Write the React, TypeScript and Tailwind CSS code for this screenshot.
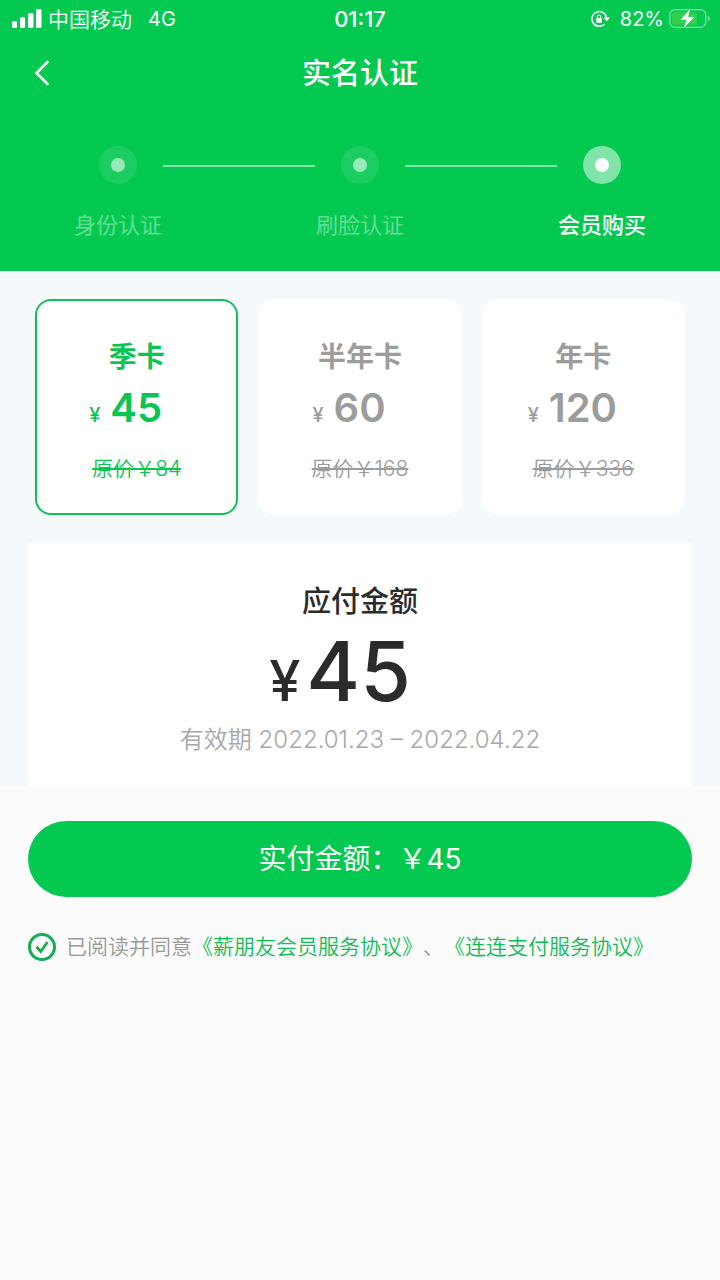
import React, { useState } from 'react';

interface Plan {
  id: string;
  name: string;
  price: number;
  original: number;
  period: string;
}

const steps = ['身份认证', '刷脸认证', '会员购买'];

const plans: Plan[] = [
  { id: 'quarter', name: '季卡', price: 45, original: 84, period: '2022.01.23 – 2022.04.22' },
  { id: 'half', name: '半年卡', price: 60, original: 168, period: '2022.01.23 – 2022.07.22' },
  { id: 'year', name: '年卡', price: 120, original: 336, period: '2022.01.23 – 2023.01.22' },
];

function StatusBar() {
  return (
    <div className="grid h-[38px] grid-cols-[1fr_auto_1fr] items-center px-[10px] text-[20px] leading-none">
      <div className="flex items-center">
        <svg className="mr-[6px] h-5 w-[32px]" viewBox="-2 0 32 20" fill="currentColor">
          <rect x="0" y="12" width="5" height="7" rx="1.6" />
          <rect x="8" y="8" width="5" height="11" rx="1.6" />
          <rect x="16" y="4" width="5.5" height="15" rx="1.6" />
          <rect x="24" y="0" width="5.5" height="19" rx="1.6" />
        </svg>
        <span className="mr-4 text-[21px] font-[350]">中国移动</span>
        <span className="font-normal">4G</span>
      </div>
      <span className="text-[22px] font-medium">01:17</span>
      <div className="flex items-center justify-end">
        {/* Rotation lock */}
        <svg className="mr-[10px] h-5 w-5" viewBox="0 0 20 20" fill="none">
          <path d="M14.4 15.2A7.4 7.4 0 1 1 16.6 9" stroke="currentColor" strokeWidth="1.6" />
          <path d="M13.6 8.6h6.2l-3.1 4z" fill="currentColor" />
          <rect x="6.2" y="9" width="5.6" height="5" rx="0.8" fill="currentColor" />
          <path d="M7.4 9.5V7.6a1.6 1.6 0 0 1 3.2 0v1.9" stroke="currentColor" strokeWidth="1.1" />
        </svg>
        <span className="mr-1 font-normal">82%</span>
        {/* Charging battery */}
        <svg className="h-[22px] w-[42px]" viewBox="0 0 42 22" fill="none">
          <rect x="1.8" y="1.8" width="36" height="17.4" rx="5" stroke="#fff" strokeOpacity="0.4" strokeWidth="1.6" />
          <rect x="4" y="4.3" width="25" height="12.4" rx="3" fill="#4fd64b" fillOpacity="0.6" />
          <path d="M39.8 7.5v6c1.5-.5 2.2-1.600 2.200-3s-.7-2.500-2.200-3z" fill="#fff" fillOpacity="0.4" />
          <path d="M22.500 0 12 12h6L15.200 21 27 8.800h-6.400z" fill="#fff" stroke="#03c950" strokeWidth="0.6" />
        </svg>
      </div>
    </div>
  );
}

function Steps({ current }: { current: number }) {
  return (
    <ol className="flex px-[73px] pt-9">
      {steps.map((step, i) => {
        const active = i === current;
        return (
          <React.Fragment key={step}>
            {i > 0 && <li aria-hidden="true" className="mt-[19px] h-[2px] flex-1 bg-white/50" />}
            <li className="flex w-[90px] flex-col items-center">
              <span
                className={`flex h-[38px] w-[38px] items-center justify-center rounded-full ${
                  active ? 'bg-white/50' : 'bg-white/10'
                }`}
              >
                <span className={`h-[14px] w-[14px] rounded-full ${active ? 'bg-white' : 'bg-white/55'}`} />
              </span>
              <span
                className={`mt-[25px] text-[22px] leading-8 whitespace-nowrap ${
                  active ? 'font-medium text-white' : 'text-white/40'
                }`}
              >
                {step}
              </span>
            </li>
          </React.Fragment>
        );
      })}
    </ol>
  );
}

interface PlanCardProps {
  plan: Plan;
  checked: boolean;
  onSelect: () => void;
}

function PlanCard({ plan, checked, onSelect }: PlanCardProps) {
  return (
    <label
      className={`relative flex cursor-pointer flex-col items-center rounded-2xl border-2 bg-white pt-9 pb-7 ${
        checked ? 'border-[#13bf58] text-[#0bc553]' : 'border-white text-[#9c9c9c]'
      }`}
    >
      <input type="radio" name="plan" className="sr-only" checked={checked} onChange={onSelect} />
      <span className="text-[28px] leading-10 font-bold">{plan.name}</span>
      <span className="flex items-baseline gap-[10px] pr-[22px]">
        <span className="text-[20px] leading-none font-medium">¥</span>
        <span className="text-[40px] leading-[62px] font-semibold">{plan.price}</span>
      </span>
      <s className="mt-[14px] text-[21px] leading-8 font-[350]">原价￥{plan.original}</s>
    </label>
  );
}

export default function App() {
  const [selected, setSelected] = useState('quarter');
  const [agreed, setAgreed] = useState(true);
  const plan = plans.find((p) => p.id === selected) ?? plans[0];

  return (
    <div className="min-h-screen bg-[#fbfbfb] font-[Inter,'Noto_Sans_CJK_SC',sans-serif]" lang="zh-CN">
      {/* Header */}
      <header className="bg-[#03c950] pb-[30px] text-white">
        <StatusBar />
        <div className="grid h-[72px] grid-cols-[1fr_auto_1fr] items-center px-7">
          <button type="button" aria-label="返回" className="flex h-7 w-7 items-center justify-center">
            <svg className="h-7 w-7" viewBox="0 0 28 28" fill="none">
              <path d="M19.5 2 8.5 13l11 11" stroke="currentColor" strokeWidth="2.6" strokeLinecap="round" strokeLinejoin="round" />
            </svg>
          </button>
          <h1 className="text-[29px] leading-10 font-medium">实名认证</h1>
        </div>
        <Steps current={2} />
      </header>

      {/* Plans */}
      <main>
        <section className="bg-[#f5f9fc] px-7 pt-7">
          <div className="mb-7 grid grid-cols-3 gap-5 px-[7px]">
            {plans.map((p) => (
              <PlanCard key={p.id} plan={p} checked={p.id === selected} onSelect={() => setSelected(p.id)} />
            ))}
          </div>

          <div className="flex flex-col items-center bg-white pt-[39px] pb-7 text-[#2b2b2b]">
            <h2 className="text-[29px] leading-10 font-medium">应付金额</h2>
            <p className="flex items-baseline gap-[6px] pr-10 font-medium">
              <span className="text-[56px] leading-none">¥</span>
              <span className="text-[82px] leading-[100px]">{plan.price}</span>
            </p>
            <p className="text-[24px] leading-9 font-[350] text-[#a8a8a8]">有效期 {plan.period}</p>
          </div>
        </section>

        {/* Payment */}
        <section className="px-7 pt-[35px]">
          <button type="button" className="h-[76px] w-full rounded-full bg-[#03c950] text-[28px] text-white">
            实付金额：￥{plan.price}
          </button>
          <div className="mt-[34px] flex items-center text-[21px] leading-8 font-[350] whitespace-nowrap text-[#999]">
            <label className="flex items-center">
              <span className="relative mr-[10px] h-7 w-7">
                <input
                  type="checkbox"
                  className="block h-7 w-7 appearance-none rounded-full border-3 border-[#16ad55]"
                  checked={agreed}
                  onChange={(e) => setAgreed(e.target.checked)}
                />
                {agreed && (
                  <svg className="pointer-events-none absolute inset-0 h-7 w-7" viewBox="0 0 28 28" fill="none">
                    <path d="M8.5 13.8 12.7 18.5 19.5 9" stroke="#16ad55" strokeWidth="2.8" />
                  </svg>
                )}
              </span>
              <span>已阅读并同意</span>
            </label>
            <a href="#member" className="text-[#0fbd54]">《薪朋友会员服务协议》</a>
            <span>、</span>
            <a href="#pay" className="text-[#0fbd54]">《连连支付服务协议》</a>
          </div>
        </section>
      </main>
    </div>
  );
}
